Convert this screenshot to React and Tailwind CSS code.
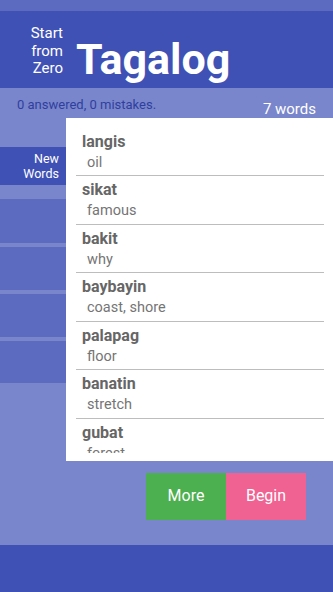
import React from 'react'

const words = [
  ['langis', 'oil'],
  ['sikat', 'famous'],
  ['bakit', 'why'],
  ['baybayin', 'coast, shore'],
  ['palapag', 'floor'],
  ['banatin', 'stretch'],
  ['gubat', 'forest'],
]

export default function App() {
  return (
    <div className="flex h-[592px] w-[333px] flex-col overflow-hidden bg-[#7986cb]" style={{ fontFamily: 'Roboto, "Noto Sans", sans-serif' }}>
      <div className="h-[11px] bg-[#5c6bc0]" />
      <header className="flex h-[77px] items-start bg-[#3f51b5] pl-[20px] text-white">
        <div className="mt-[14px] w-[43px] text-right text-[15px] leading-[17.5px]">
          <div>Start</div>
          <div>from</div>
          <div>Zero</div>
        </div>
        <div className="ml-[13px] mt-[27px] text-[43px] font-bold leading-none">Tagalog</div>
      </header>

      <div className="relative flex-1">
        <div className="flex items-start justify-between pl-[17px] pr-[17px] pt-[7px]">
          <div className="text-[13px] text-[#303f9f]">0 answered, 0 mistakes.</div>
          <div className="mt-[3px] text-[15px] text-white">7 words</div>
        </div>

        <div className="-mt-[3px] flex">
          <div className="mt-[29px] flex w-[66px] flex-col">
            <div className="flex h-[38px] flex-col justify-center bg-[#3f51b5] pr-[7px] text-right text-[12.5px] leading-[15px] text-white">
              <div>New</div>
              <div>Words</div>
            </div>
            <div className="mt-[14px] h-[44px] bg-[#5c6bc0]" />
            <div className="mt-[4px] h-[43px] bg-[#5c6bc0]" />
            <div className="mt-[4px] h-[43px] bg-[#5c6bc0]" />
            <div className="mt-[4px] h-[42px] bg-[#5c6bc0]" />
          </div>

          <div className="flex h-[343px] flex-1 flex-col bg-white pb-[8px] pl-[10px] pr-[9px] pt-[10px]">
            <div className="flex-1 overflow-hidden">
              {words.map(([w, d]) => (
                <div key={w} className="border-b border-[#bdbdbd] pb-[2px] pt-[3px]">
                  <div className="pl-[6px] text-[16px] font-bold leading-[22px] text-[#666666]">{w}</div>
                  <div className="pl-[11px] text-[14.5px] leading-[20.6px] text-[#757575]">{d}</div>
                </div>
              ))}
            </div>
          </div>
        </div>

        <div className="mt-[12px] flex pl-[146px]">
          <button className="h-[47px] w-[80px] bg-[#4caf50] text-[16px] text-white">More</button>
          <button className="h-[47px] w-[80px] bg-[#f06292] text-[16px] text-white">Begin</button>
        </div>
      </div>

      <div className="h-[47px] bg-[#3f51b5]" />
    </div>
  )
}
